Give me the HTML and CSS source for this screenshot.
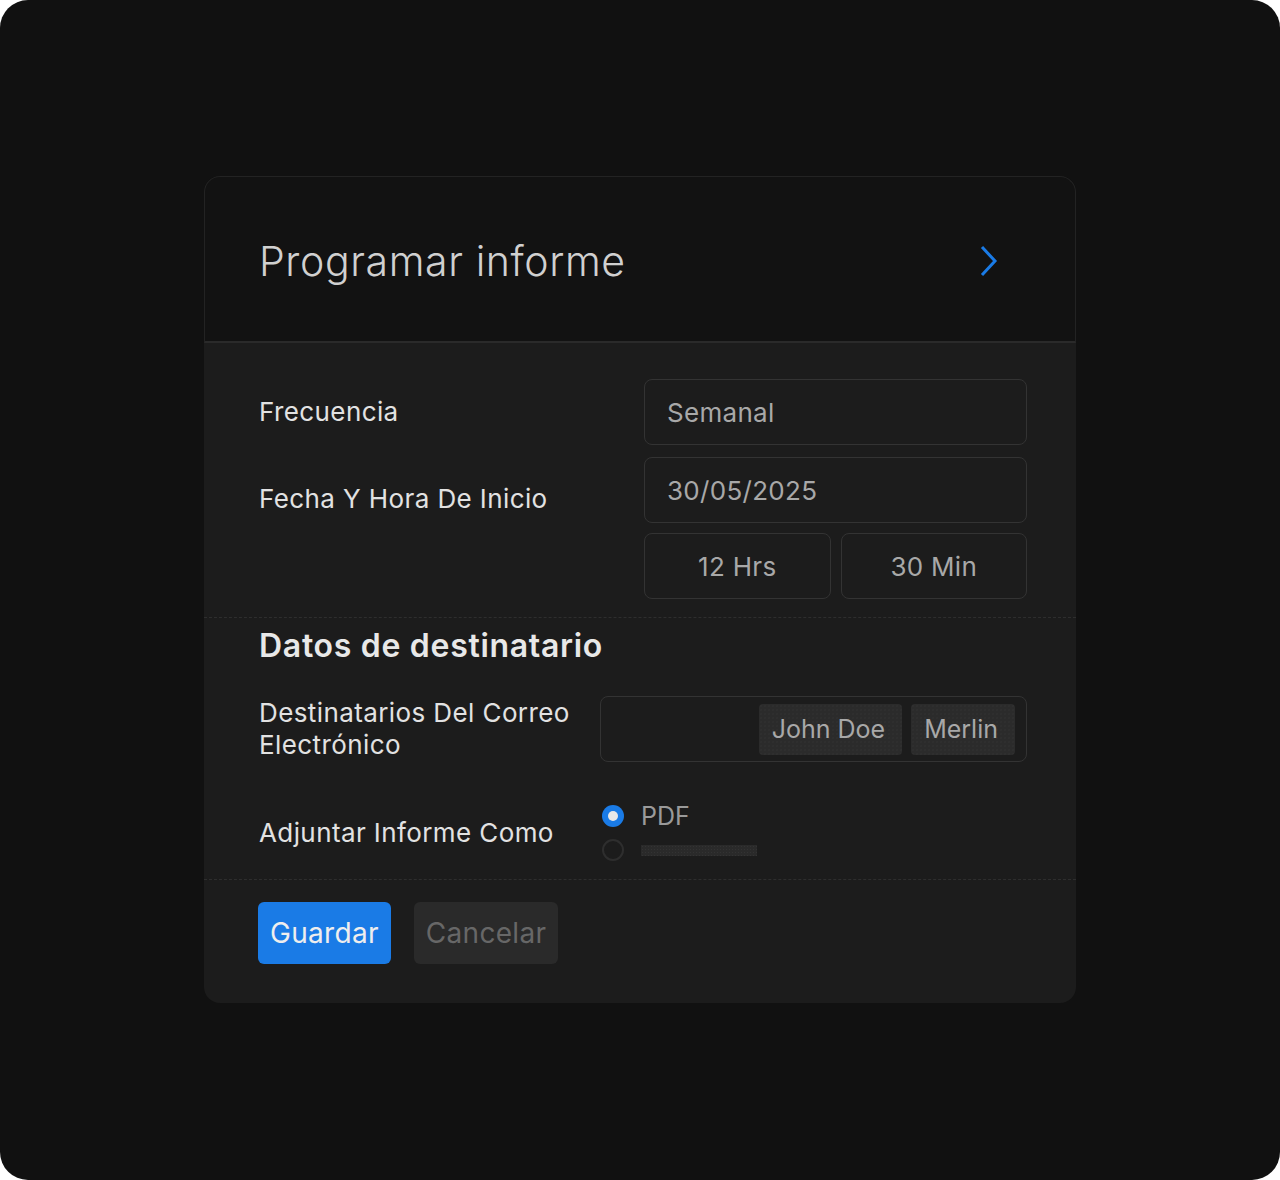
FILE: index.html
```html
<!DOCTYPE html>
<html lang="es">
<head>
  <meta charset="UTF-8" />
  <meta name="viewport" content="width=device-width, initial-scale=1.0"/>
  <title>Programar informe</title>
  <link rel="stylesheet" href="styles.css">
</head>
<body>

<div class="screen">
  <div class="card">
    <div class="card-head">
      <h1>Programar informe</h1>
      <svg class="chevron" width="20" height="34" viewBox="0 0 20 34">
        <path d="M3 3 L16 17 L3 31" fill="none" stroke="#1a7be6" stroke-width="3"/>
      </svg>
    </div>

    <div class="section">
      <div class="row">
        <div class="label">Frecuencia</div>
        <div class="field">Semanal</div>
      </div>
      <div class="row row-date">
        <div class="label">Fecha Y Hora De Inicio</div>
        <div class="fields">
          <div class="field">30/05/2025</div>
          <div class="split">
            <div class="field center">12 Hrs</div>
            <div class="field center">30 Min</div>
          </div>
        </div>
      </div>
    </div>

    <div class="section section-dest">
      <h2>Datos de destinatario</h2>
      <div class="row row-wide">
        <div class="label">Destinatarios Del Correo<br>Electrónico</div>
        <div class="field chips">
          <span class="chip">John Doe</span>
          <span class="chip">Merlin</span>
        </div>
      </div>
      <div class="row row-wide row-attach">
        <div class="label">Adjuntar Informe Como</div>
        <div class="options">
          <div class="option"><span class="radio checked"></span>PDF</div>
          <div class="option"><span class="radio"></span><span class="placeholder"></span></div>
        </div>
      </div>
    </div>

    <div class="actions">
      <button class="btn primary">Guardar</button>
      <button class="btn">Cancelar</button>
    </div>
  </div>
</div>

</body>
</html>
```

FILE: styles.css
```css
body {
  margin: 0;
  background: #fff;
  font-family: Inter, "Open Sans", sans-serif;
}
.screen {
  width: 1280px;
  height: 1180px;
  background: #111;
  border-radius: 28px;
  padding-top: 176px;
  box-sizing: border-box;
}
.card {
  width: 872px;
  margin-left: 204px;
  background: #1c1c1c;
  border-radius: 16px;
  overflow: hidden;
  padding-bottom: 39px;
}
.card-head {
  height: 167px;
  box-sizing: border-box;
  background: #121212;
  border: 1px solid #232323;
  border-bottom: 2px solid #2a2a2a;
  border-radius: 16px 16px 0 0;
  display: flex;
  align-items: center;
  justify-content: space-between;
  padding: 4px 76px 0 54px;
}
h1 {
  margin: 0;
  font-size: 41px;
  font-weight: 300;
  letter-spacing: 0.6px;
  color: #d0d0d0;
}
.section {
  padding: 36px 49px 18px 55px;
  border-bottom: 1px dashed #2e2e2e;
}
.row {
  display: grid;
  grid-template-columns: 1fr 383px;
  align-items: center;
  margin-bottom: 12px;
}
.row-date { margin-bottom: 0; }
.row-date .label { align-self: start; margin-top: 26px; }
.label {
  font-size: 26px;
  letter-spacing: 0.4px;
  color: #e2e2e2;
  line-height: 32px;
}
.field {
  border: 1px solid #333;
  border-radius: 8px;
  box-sizing: border-box;
  height: 66px;
  display: flex;
  align-items: center;
  padding: 0 22px;
  font-size: 26px;
  letter-spacing: 0.3px;
  color: #a8a8a8;
}
.fields { display: flex; flex-direction: column; gap: 10px; }
.split { display: grid; grid-template-columns: 1fr 1fr; gap: 10px; }
.center { justify-content: center; }

.section-dest { padding-top: 6px; padding-bottom: 18px; }
h2 {
  margin: 0 0 28px;
  font-size: 32px;
  font-weight: 600;
  letter-spacing: 0.7px;
  color: #e8e8e8;
  line-height: 44px;
}
.row-wide { grid-template-columns: 1fr 427px; }
.chips { justify-content: flex-end; gap: 9px; padding: 0 11px 0 0; }
.chip {
  background-color: #2b2b2b;
  background-image: radial-gradient(circle, #333 0.6px, transparent 0.8px);
  background-size: 4px 4px;
  border-radius: 4px;
  height: 51px;
  display: flex;
  align-items: center;
  padding: 0 17px 0 13px;
  font-size: 25px;
  letter-spacing: 0;
  color: #a8a8a8;
}
.row-attach { margin-top: 43px; margin-bottom: 0; }
.options { display: flex; flex-direction: column; gap: 12px; padding-left: 2px; }
.option {
  display: flex;
  align-items: center;
  gap: 17px;
  font-size: 25px;
  color: #9a9a9a;
  height: 22px;
}
.radio {
  width: 22px;
  height: 22px;
  border-radius: 50%;
  border: 2px solid #2e2e2e;
  box-sizing: border-box;
}
.radio.checked {
  background: #1a7be6;
  border: none;
  position: relative;
}
.radio.checked::after {
  content: "";
  position: absolute;
  left: 6px;
  top: 6px;
  width: 10px;
  height: 10px;
  border-radius: 50%;
  background: #e8e8e8;
}
.placeholder {
  width: 116px;
  height: 11px;
  background-color: #2a2a2a;
  background-image: radial-gradient(circle, #333 0.6px, transparent 0.8px);
  background-size: 3px 3px;
}
.actions {
  display: flex;
  gap: 23px;
  padding: 22px 54px 0;
}
.btn {
  height: 62px;
  border: none;
  border-radius: 6px;
  padding: 0 12px;
  font-family: inherit;
  font-size: 28px;
  letter-spacing: 0.3px;
  background: #2a2a2a;
  color: #676767;
}
.btn.primary { background: #1a7be6; color: #eee; }
```
